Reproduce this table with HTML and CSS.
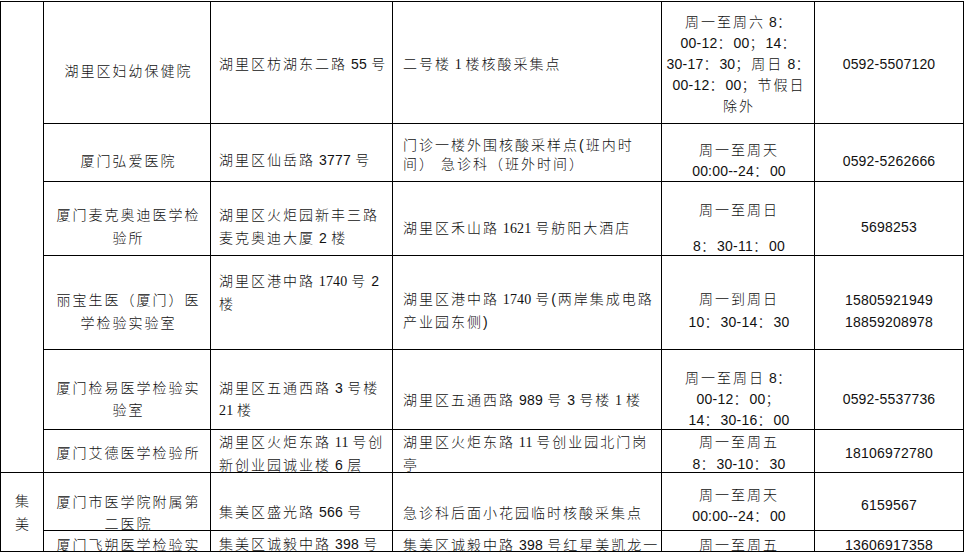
FILE: index.html
```html
<!DOCTYPE html>
<html lang="zh-CN">
<head>
<meta charset="utf-8">
<title>核酸采样点</title>
<link rel="stylesheet" href="styles.css">
</head>
<body>
<div class="sheet">
  <div class="cell area a-huli"></div>

  <div class="cell ctr t58">湖里区妇幼保健院</div>
  <div class="cell addr t51">湖里区枋湖东二路<span class="n"> 55 </span>号</div>
  <div class="cell site t51">二号楼<span class="n s"> 1 </span>楼核酸采集点</div>
  <div class="cell time l21 t10">周一至周六<span class="n"> 8</span>：<br><span class="n">00-12</span>：<span class="n">00</span>；<span class="n">14</span>：<br><span class="n">30-17</span>：<span class="n">30</span>；周日<span class="n"> 8</span>：<br><span class="n">00-12</span>：<span class="n">00</span>；节假日<br>除外</div>
  <div class="cell tel t51">0592-5507120</div>

  <div class="cell ctr t26">厦门弘爱医院</div>
  <div class="cell addr t25">湖里区仙岳路<span class="n"> 3777 </span>号</div>
  <div class="cell site l19 t12">门诊一楼外围核酸采样点(班内时<br>间） 急诊科（班外时间）</div>
  <div class="cell time l21 t16">周一至周天<br><span class="n">00:00--24</span>：<span class="n">00</span></div>
  <div class="cell tel t26">0592-5262666</div>

  <div class="cell ctr l23 t22">厦门麦克奥迪医学检<br>验所</div>
  <div class="cell addr l23 t22">湖里区火炬园新丰三路<br>麦克奥迪大厦<span class="n"> 2 </span>楼</div>
  <div class="cell site t35">湖里区禾山路<span class="n s"> 1621 </span>号舫阳大酒店</div>
  <div class="cell time l18 t19">周一至周日<br><br><span class="n">8</span>：<span class="n">30-11</span>：<span class="n">00</span></div>
  <div class="cell tel t34">5698253</div>

  <div class="cell ctr l23 t33">丽宝生医（厦门）医<br>学检验实验室</div>
  <div class="cell addr l23 t14">湖里区港中路<span class="n s"> 1740 </span>号<span class="n"> 2</span><br>楼</div>
  <div class="cell site l23 t32">湖里区港中路<span class="n s"> 1740 </span>号(两岸集成电路<br>产业园东侧)</div>
  <div class="cell time l23 t32">周一到周日<br><span class="n">10</span>：<span class="n">30-14</span>：<span class="n">30</span></div>
  <div class="cell tel t33">15805921949<br>18859208978</div>

  <div class="cell ctr t27">厦门检易医学检验实<br>验室</div>
  <div class="cell addr t27">湖里区五通西路<span class="n"> 3 </span>号楼<br><span class="n s">21 </span>楼</div>
  <div class="cell site t39">湖里区五通西路<span class="n"> 989 </span>号<span class="n"> 3 </span>号楼<span class="n s"> 1 </span>楼</div>
  <div class="cell time l21 t18">周一至周日<span class="n"> 8</span>：<br><span class="n">00-12</span>：<span class="n">00</span>；<br><span class="n">14</span>：<span class="n">30-16</span>：<span class="n">00</span></div>
  <div class="cell tel t38">0592-5537736</div>

  <div class="cell ctr t12">厦门艾德医学检验所</div>
  <div class="cell addr t1">湖里区火炬东路<span class="n s"> 11 </span>号创<br>新创业园诚业楼<span class="n"> 6 </span>层</div>
  <div class="cell site t1">湖里区火炬东路<span class="n s"> 11 </span>号创业园北门岗<br>亭</div>
  <div class="cell time t1">周一至周五<br><span class="n">8</span>：<span class="n">30-10</span>：<span class="n">30</span></div>
  <div class="cell tel t12">18106972780</div>

  <div class="cell area a-jimei l23 t17">集<br>美</div>

  <div class="cell ctr t18">厦门市医学院附属第<br>二医院</div>
  <div class="cell addr t28">集美区盛光路<span class="n"> 566 </span>号</div>
  <div class="cell site t29">急诊科后面小花园临时核酸采集点</div>
  <div class="cell time l21 t12">周一至周天<br><span class="n">00:00--24</span>：<span class="n">00</span></div>
  <div class="cell tel t21">6159567</div>

  <div class="cell ctr t3">厦门飞朔医学检验实</div>
  <div class="cell addr t2">集美区诚毅中路<span class="n"> 398 </span>号</div>
  <div class="cell site t3">集美区诚毅中路<span class="n"> 398 </span>号红星美凯龙一</div>
  <div class="cell time t3">周一至周五</div>
  <div class="cell tel t3">13606917358</div>
</div>
</body>
</html>
```
FILE: styles.css
```css
html, body {
  margin: 0;
  padding: 0;
  background: #fff;
}

body {
  font-family: "Liberation Sans", "Noto Sans CJK SC", sans-serif;
  font-size: 14px;
  font-weight: 300;
  letter-spacing: 2px;
  color: #111;
}

.sheet {
  margin-top: 1px;
  display: grid;
  grid-template-columns: 43px 167px 182px 269px 153px 149px;
  grid-template-rows: 122px 58px 74px 94px 80px 43px 58px 21px;
  width: 964px;
  box-sizing: border-box;
  border-top: 1px solid #000;
  border-left: 1px solid #000;
}

.cell {
  box-sizing: border-box;
  border-right: 1px solid #000;
  border-bottom: 1px solid #000;
  white-space: nowrap;
  line-height: 22px;
  min-width: 0;
}

.area {
  grid-column: 1;
  text-align: center;
  padding-left: 2px;
}

.a-huli { grid-row: 1 / span 6; }
.a-jimei { grid-row: 7 / span 2; }

.ctr { text-align: center; padding-left: 3px; }
.addr { padding-left: 8px; }
.site { padding-left: 10px; }
.time { text-align: center; padding-left: 2px; }
.tel { text-align: center; letter-spacing: 0.2px; }

.n { letter-spacing: 0.2px; }
.s { font-family: "Liberation Serif", serif; }

.l18 { line-height: 18px; }
.l19 { line-height: 19px; }
.l21 { line-height: 21px; }
.l23 { line-height: 23px; }

.t1 { padding-top: 1px; }
.t2 { padding-top: 2px; }
.t3 { padding-top: 3px; }
.t10 { padding-top: 10px; }
.t12 { padding-top: 12px; }
.t14 { padding-top: 14px; }
.t16 { padding-top: 16px; }
.t17 { padding-top: 17px; }
.t18 { padding-top: 18px; }
.t19 { padding-top: 19px; }
.t21 { padding-top: 21px; }
.t22 { padding-top: 22px; }
.t25 { padding-top: 25px; }
.t26 { padding-top: 26px; }
.t27 { padding-top: 27px; }
.t28 { padding-top: 28px; }
.t29 { padding-top: 29px; }
.t32 { padding-top: 32px; }
.t33 { padding-top: 33px; }
.t34 { padding-top: 34px; }
.t35 { padding-top: 35px; }
.t38 { padding-top: 38px; }
.t39 { padding-top: 39px; }
.t51 { padding-top: 51px; }
.t58 { padding-top: 58px; }
```
